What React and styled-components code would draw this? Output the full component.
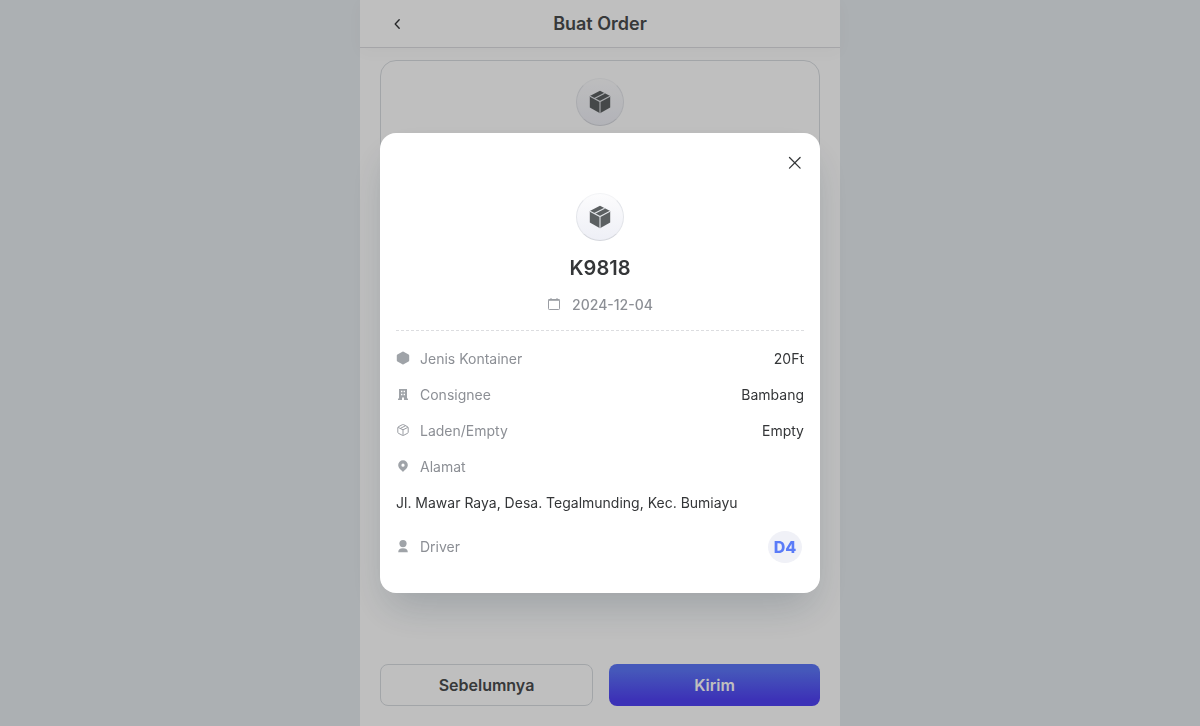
import styled, { createGlobalStyle } from 'styled-components'

const App = () => {
    return (
        <>
            <GlobalStyle />
            <Page>
                <Header>
                    <BackButton type='button' aria-label='Kembali'>
                        <svg width='16' height='16' viewBox='0 0 16 16' fill='none'>
                            <path d='M10.2 3.8 6.2 8l4 4.2' stroke='currentColor' strokeWidth='1.4' strokeLinecap='round' strokeLinejoin='round' />
                        </svg>
                    </BackButton>
                    <Title>Buat Order</Title>
                </Header>
                <Main>
                    <Card>
                        <BoxBadge />
                    </Card>
                </Main>
                <Footer>
                    <OutlineButton type='button'>Sebelumnya</OutlineButton>
                    <PrimaryButton type='button'>Kirim</PrimaryButton>
                </Footer>
            </Page>
            <Overlay>
                <Modal role='dialog' aria-modal='true' aria-labelledby='order-code'>
                    <CloseButton type='button' aria-label='Tutup'>
                        <svg width='14' height='14' viewBox='0 0 14 14' fill='none'>
                            <path d='m1.5 1.5 10.6 10.6m0-10.6L1.5 12.1' stroke='currentColor' strokeWidth='1.3' strokeLinecap='round' />
                        </svg>
                    </CloseButton>
                    <Summary>
                        <BoxBadge />
                        <OrderCode id='order-code'>K9818</OrderCode>
                        <OrderDate>
                            <CalendarIcon />
                            <time dateTime='2024-12-04'>2024-12-04</time>
                        </OrderDate>
                    </Summary>
                    <Details>
                        <Row>
                            <Label><HexagonIcon />Jenis Kontainer</Label>
                            <Value>20Ft</Value>
                        </Row>
                        <Row>
                            <Label><BuildingIcon />Consignee</Label>
                            <Value>Bambang</Value>
                        </Row>
                        <Row>
                            <Label><PackageIcon />Laden/Empty</Label>
                            <Value>Empty</Value>
                        </Row>
                        <Row $stacked>
                            <Label><PinIcon />Alamat</Label>
                            <Value>Jl. Mawar Raya, Desa. Tegalmunding, Kec. Bumiayu</Value>
                        </Row>
                        <DriverRow>
                            <Label><UserIcon />Driver</Label>
                            <Avatar>D4</Avatar>
                        </DriverRow>
                    </Details>
                </Modal>
            </Overlay>
        </>
    )
}

export default App

const BoxBadge = () => (
    <Badge>
        <svg width='24' height='24' viewBox='0 0 24 24'>
            <path d='M12 .8 22.2 6v11.6L12 23.2 1.8 17.6V6z' fill='#5c6062' />
            <path d='M2 6.2 12 11.6 22 6.2M12 11.6V23M6.4 8.6 16.6 3.2' fill='none' stroke='#e4e6ea' strokeWidth='1.1' />
        </svg>
    </Badge>
)

const CalendarIcon = () => (
    <svg width='14' height='14' viewBox='0 0 14 14' fill='none' stroke='#9a9da3'>
        <rect x='1.5' y='2.5' width='11' height='10' rx='.8' />
        <path d='M1.5 3h11' strokeWidth='1.6' />
        <path d='M4 1v1.4M10 1v1.4' />
    </svg>
)

const HexagonIcon = () => (
    <svg width='14' height='14' viewBox='0 0 14 14' fill='#9fa3a8'>
        <path d='M6.4.7a1.2 1.2 0 0 1 1.2 0l5 2.7a1.2 1.2 0 0 1 .6 1v5.2a1.2 1.2 0 0 1-.6 1l-5 2.7a1.2 1.2 0 0 1-1.2 0l-5-2.7a1.2 1.2 0 0 1-.6-1V4.4a1.2 1.2 0 0 1 .6-1z' />
    </svg>
)

const BuildingIcon = () => (
    <svg width='14' height='14' viewBox='0 0 14 14' fill='#9fa3a8'>
        <path fillRule='evenodd' d='M3 2h8v9.6h1V13H8v-2.4H6V13H2v-1.4h1zM5 3.8v1.4h1.4V3.8zm2.6 0v1.4H9V3.8zM5 6.8v1.4h1.4V6.8zm2.6 0v1.4H9V6.8z' />
    </svg>
)

const PackageIcon = () => (
    <svg width='14' height='14' viewBox='0 0 14 14' fill='none' stroke='#9a9da3' strokeLinejoin='round'>
        <path d='M6.5 1.6a1 1 0 0 1 1 0l4.2 2.2a1 1 0 0 1 .5.9v4.6a1 1 0 0 1-.5.9l-4.2 2.2a1 1 0 0 1-1 0l-4.2-2.2a1 1 0 0 1-.5-.9V4.7a1 1 0 0 1 .5-.9zM2.1 4.4 7 6.8l4.9-2.4M7 6.8v5.6M4.4 5.4l5-2.6' />
    </svg>
)

const PinIcon = () => (
    <svg width='14' height='14' viewBox='0 0 14 14' fill='#9fa3a8'>
        <path fillRule='evenodd' d='M7 1.3a4.8 4.8 0 0 1 4.8 4.8c0 3-2.6 4.7-4.8 6.8-2.2-2.1-4.8-3.8-4.8-6.8A4.8 4.8 0 0 1 7 1.3m0 3.3a1.6 1.6 0 1 0 0 3.2 1.6 1.6 0 0 0 0-3.2' />
    </svg>
)

const UserIcon = () => (
    <svg width='14' height='14' viewBox='0 0 14 14' fill='#9fa3a8'>
        <circle cx='7' cy='4.6' r='3.6' />
        <path d='M2.2 13.2c0-2.8 1.6-4 4.8-4s4.8 1.2 4.8 4z' />
    </svg>
)

const GlobalStyle = createGlobalStyle`
    * {
        box-sizing: border-box;
    }
    body {
        margin: 0;
        background: #e6ebef;
        color: #343638;
        font-family: Inter, 'Liberation Sans', sans-serif;
        font-size: 14px;
        line-height: 20px;
    }
    button {
        font-family: inherit;
        cursor: pointer;
    }
    svg {
        display: block;
        flex-shrink: 0;
    }
`

const Page = styled.div`
    display: flex;
    flex-direction: column;
    max-width: 480px;
    min-height: 100vh;
    margin: 0 auto;
    background: #fff;
`

const Header = styled.header`
    display: grid;
    grid-template-columns: 34px 1fr 34px;
    align-items: center;
    height: 48px;
    padding: 0 20px;
    border-bottom: 1px solid #dcdde0;
    box-shadow: 0 4px 16px rgba(0, 0, 0, 0.03);
`

const BackButton = styled.button`
    display: flex;
    align-items: center;
    justify-content: center;
    width: 34px;
    height: 34px;
    padding: 0;
    border: 0;
    background: none;
    color: #343638;
`

const Title = styled.h1`
    margin: 0;
    font-size: 18px;
    line-height: 24px;
    font-weight: 600;
    text-align: center;
    color: #4a4c4e;
`

const Main = styled.main`
    display: flex;
    flex: 1;
    padding: 12px 20px;
`

const Card = styled.section`
    display: flex;
    flex: 1;
    flex-direction: column;
    align-items: center;
    align-self: flex-start;
    min-height: 400px;
    padding: 17px 16px;
    border: 1px solid #d9dde1;
    border-radius: 16px;
`

const Badge = styled.div`
    display: flex;
    align-items: center;
    justify-content: center;
    width: 48px;
    height: 48px;
    border: 1px solid #e3e5ea;
    border-top-color: #f3f4f6;
    border-bottom-color: #d5d7dd;
    border-radius: 50%;
    background: linear-gradient(#fcfcfd, #eeeff6);
`

const Footer = styled.footer`
    display: flex;
    gap: 16px;
    padding: 20px;
`

const Button = styled.button`
    flex: 1;
    height: 42px;
    padding: 0;
    border: 0;
    border-radius: 8px;
    font-size: 16px;
    line-height: 24px;
    font-weight: 600;
`

const OutlineButton = styled(Button)`
    border: 1px solid #d9dde1;
    background: #fff;
    color: #4a4c4e;
`

const PrimaryButton = styled(Button)`
    background: linear-gradient(#5d76f8 15%, #5143f5 85%);
    color: #fff;
`

const Overlay = styled.div`
    position: fixed;
    inset: 0;
    display: flex;
    align-items: center;
    justify-content: center;
    padding: 20px;
    background: rgba(0, 0, 0, 0.25);
`

const Modal = styled.div`
    display: flex;
    flex-direction: column;
    width: 100%;
    max-width: 440px;
    padding: 16px 16px 30px;
    border-radius: 16px;
    background: #fff;
    box-shadow: 0 20px 40px -8px rgba(14, 40, 60, 0.2), 0 0 24px rgba(0, 0, 0, 0.02);
`

const CloseButton = styled.button`
    display: flex;
    align-items: center;
    justify-content: center;
    align-self: flex-end;
    width: 18px;
    height: 28px;
    padding: 0;
    border: 0;
    background: none;
    color: #343638;
`

const Summary = styled.div`
    display: flex;
    flex-direction: column;
    align-items: center;
    padding: 16px 0 15px;
    border-bottom: 1px dashed #dcdde0;
`

const OrderCode = styled.h2`
    margin: 13px 0;
    font-size: 20px;
    line-height: 28px;
    font-weight: 600;
`

const OrderDate = styled.div`
    display: flex;
    align-items: center;
    gap: 11px;
    color: #8c8f95;
    font-weight: 500;

    svg {
        margin-bottom: 2px;
    }
`

const Details = styled.dl`
    display: flex;
    flex-direction: column;
    gap: 16px;
    margin: 0;
    padding-top: 18px;
`

const Row = styled.div`
    display: flex;
    flex-direction: ${({ $stacked }) => ($stacked ? 'column' : 'row')};
    justify-content: space-between;
    gap: ${({ $stacked }) => ($stacked ? '16px' : '8px')};
`

const DriverRow = styled(Row)`
    align-items: center;
    padding: 2px 2px 0 0;
`

const Label = styled.dt`
    display: flex;
    align-items: center;
    gap: 10px;
    color: #8c8f95;

    svg {
        margin-bottom: 2px;
    }
`

const Value = styled.dd`
    margin: 0;
`

const Avatar = styled.dd`
    display: flex;
    align-items: center;
    justify-content: center;
    width: 34px;
    height: 32px;
    margin: 0;
    border-radius: 50%;
    background: #f0f1f7;
    color: #5b7cf8;
    font-size: 16px;
    font-weight: 800;
`
